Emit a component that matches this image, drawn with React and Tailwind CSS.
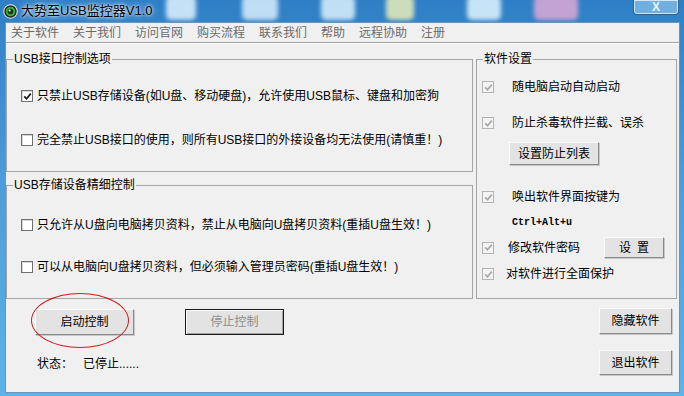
import React from 'react'

const font = "font-['Liberation_Sans','Noto_Sans_CJK_SC',sans-serif]"

function Check({ checked, disabled }) {
  return (
    <span
      className={
        disabled
          ? 'flex h-[12px] w-[12px] shrink-0 items-center justify-center border border-[#b4b4b4] bg-[#f4f4f4]'
          : 'flex h-[12px] w-[12px] shrink-0 items-center justify-center border border-[#707070] bg-white shadow-[inset_1px_1px_0_#d8d8d8]'
      }
    >
      {checked && (
        <svg width="9" height="9" viewBox="0 0 9 9">
          <path
            d="M1.2 4.3 L3.5 6.8 L7.8 1.6"
            fill="none"
            stroke={disabled ? '#a8a8a8' : '#1a1a1a'}
            strokeWidth="1.7"
          />
        </svg>
      )}
    </span>
  )
}

function Btn({ children, className = '', def, dim }) {
  return (
    <button
      type="button"
      className={`flex items-center justify-center border bg-[#e3e3e3] text-[12px] leading-none ${
        def
          ? 'border-[#1a1a1a] shadow-[inset_1px_1px_0_#fff,inset_-1px_-1px_0_#a0a0a0]'
          : 'border-[#fbfbfb] border-r-[#8a8a8a] border-b-[#8a8a8a] shadow-[1px_1px_0_#c8c8c8]'
      } ${dim ? 'text-[#8d8d8d]' : 'text-black'} ${className}`}
    >
      {children}
    </button>
  )
}

const menu = ['关于软件', '关于我们', '访问官网', '购买流程', '联系我们', '帮助', '远程协助', '注册']

const blobs = [
  'left-[166px] w-[30px] bg-[#d6ecfb]',
  'left-[242px] w-[36px] bg-[#cfe8fa]',
  'left-[321px] w-[34px] bg-[#d2eafa]',
  'left-[386px] w-[28px] bg-[#dfe8b8]',
  'left-[467px] w-[34px] bg-[#d8eefc]',
  'left-[534px] w-[44px] bg-[#d6a6d6]',
]

export default function App() {
  return (
    <div className={`${font} relative h-[396px] w-[684px] overflow-hidden bg-gradient-to-b from-[#2f7fc6] via-[#4d9fdc] to-[#5db3e8] text-[12px] text-black`}>
      {/* desktop icons seen through the glass */}
      {blobs.map((b) => (
        <div key={b} className={`absolute top-[-4px] h-[24px] rounded-[5px] opacity-90 blur-[2px] ${b}`} />
      ))}

      {/* Title bar */}
      <div className="relative flex h-[22px] items-center pl-[3px]">
        <svg width="15" height="15" viewBox="0 0 15 15">
          <circle cx="7.5" cy="7.5" r="7.2" fill="#e8efe8" />
          <circle cx="7.5" cy="7.5" r="6.2" fill="#1d2b1d" />
          <circle cx="7.5" cy="7.5" r="4.8" fill="#3fa640" />
          <circle cx="7.5" cy="7.5" r="2.8" fill="#0e3a12" />
          <circle cx="6.6" cy="6.6" r="1.1" fill="#c9f0c0" />
        </svg>
        <span className="ml-[3px] text-[13px] text-black [text-shadow:0_0_6px_#fff,0_0_3px_#fff]">
          大势至USB监控器V1.0
        </span>
        <div className="ml-auto mr-[5px] flex h-[15px] w-[46px] items-center justify-center self-start rounded-b-[4px] border border-t-0 border-[#2b5f91] bg-[#8fc3ea]/70 shadow-[inset_0_0_0_1px_#cfe7fa]">
          <span className="text-[12px] font-bold leading-none text-[#eef6fc]">X</span>
        </div>
      </div>

      {/* Client area */}
      <div className="relative ml-[5px] h-[371px] w-[675px] border border-[#6f93b8] bg-[#f0f0f0]">
        {/* Menu */}
        <div className="flex h-[20px] items-center gap-[14px] border-b border-[#a0a0a0] bg-[#f0f0f0] px-[5px] text-[#6a6a6a] shadow-[0_1px_0_#fff]">
          {menu.map((m) => (
            <span key={m} className="leading-[16px]">{m}</span>
          ))}
        </div>

        {/* Groups */}
        <div className="flex gap-[3px] pt-[8px]">
          <div className="flex w-[467px] flex-col gap-[5px]">
            <fieldset className="h-[121px] border border-[#a5a5a5]">
              <legend className="ml-[6px] px-[1px] leading-[16px]">USB接口控制选项</legend>
              <div className="ml-[14px] mt-[21px] flex items-center gap-[4px] leading-[16px]">
                <Check checked />
                <span>只禁止USB存储设备(如U盘、移动硬盘)，允许使用USB鼠标、键盘和加密狗</span>
              </div>
              <div className="ml-[14px] mt-[28px] flex items-center gap-[4px] leading-[16px]">
                <Check />
                <span>完全禁止USB接口的使用，则所有USB接口的外接设备均无法使用(请慎重！)</span>
              </div>
            </fieldset>

            <fieldset className="h-[122px] border border-[#a5a5a5]">
              <legend className="ml-[6px] px-[1px] leading-[16px]">USB存储设备精细控制</legend>
              <div className="ml-[14px] mt-[24px] flex items-center gap-[4px] leading-[16px]">
                <Check />
                <span>只允许从U盘向电脑拷贝资料，禁止从电脑向U盘拷贝资料(重插U盘生效！)</span>
              </div>
              <div className="ml-[14px] mt-[26px] flex items-center gap-[4px] leading-[16px]">
                <Check />
                <span>可以从电脑向U盘拷贝资料，但必须输入管理员密码(重插U盘生效！)</span>
              </div>
            </fieldset>
          </div>

          <fieldset className="h-[248px] w-[201px] border border-[#a5a5a5]">
            <legend className="ml-[6px] px-[1px] leading-[16px]">软件设置</legend>
            <div className="ml-[5px] mt-[12px] flex items-center leading-[16px]">
              <Check checked disabled />
              <span className="ml-[18px]">随电脑启动自动启动</span>
            </div>
            <div className="ml-[5px] mt-[20px] flex items-center leading-[16px]">
              <Check checked disabled />
              <span className="ml-[18px]">防止杀毒软件拦截、误杀</span>
            </div>
            <Btn className="ml-[32px] mt-[11px] h-[23px] w-[90px]">设置防止列表</Btn>
            <div className="ml-[5px] mt-[24px] flex items-center leading-[16px]">
              <Check checked disabled />
              <span className="ml-[18px]">唤出软件界面按键为</span>
            </div>
            <div className="ml-[35px] mt-[12px] font-['Liberation_Mono',monospace] text-[10px] font-bold leading-[12px]">
              Ctrl+Alt+u
            </div>
            <div className="ml-[5px] mt-[8px] flex items-center leading-[16px]">
              <Check checked disabled />
              <span className="ml-[14px]">修改软件密码</span>
              <Btn className="ml-[24px] h-[21px] w-[60px] tracking-[6px] pl-[6px]">设置</Btn>
            </div>
            <div className="ml-[5px] mt-[8px] flex items-center leading-[16px]">
              <Check checked disabled />
              <span className="ml-[12px]">对软件进行全面保护</span>
            </div>
          </fieldset>
        </div>

        {/* Bottom controls */}
        <div className="flex items-start justify-between pl-[29px] pr-[7px] pt-[9px]">
          <div className="mt-[1px] flex flex-col">
            <div className="flex gap-[51px]">
              <Btn className="h-[26px] w-[99px]">启动控制</Btn>
              <Btn def dim className="h-[26px] w-[99px]">停止控制</Btn>
            </div>
            <div className="ml-[2px] mt-[21px] flex leading-[16px]">
              <span className="w-[46px]">状态：</span>
              <span>已停止......</span>
            </div>
          </div>
          <div className="flex flex-col gap-[16px]">
            <Btn className="h-[26px] w-[73px]">隐藏软件</Btn>
            <Btn className="h-[25px] w-[73px]">退出软件</Btn>
          </div>
        </div>

        {/* red annotation ring */}
        <div className="pointer-events-none absolute left-[25px] top-[270px] h-[55px] w-[98px] rounded-[50%] border border-[#cc2020]" />
      </div>
    </div>
  )
}
